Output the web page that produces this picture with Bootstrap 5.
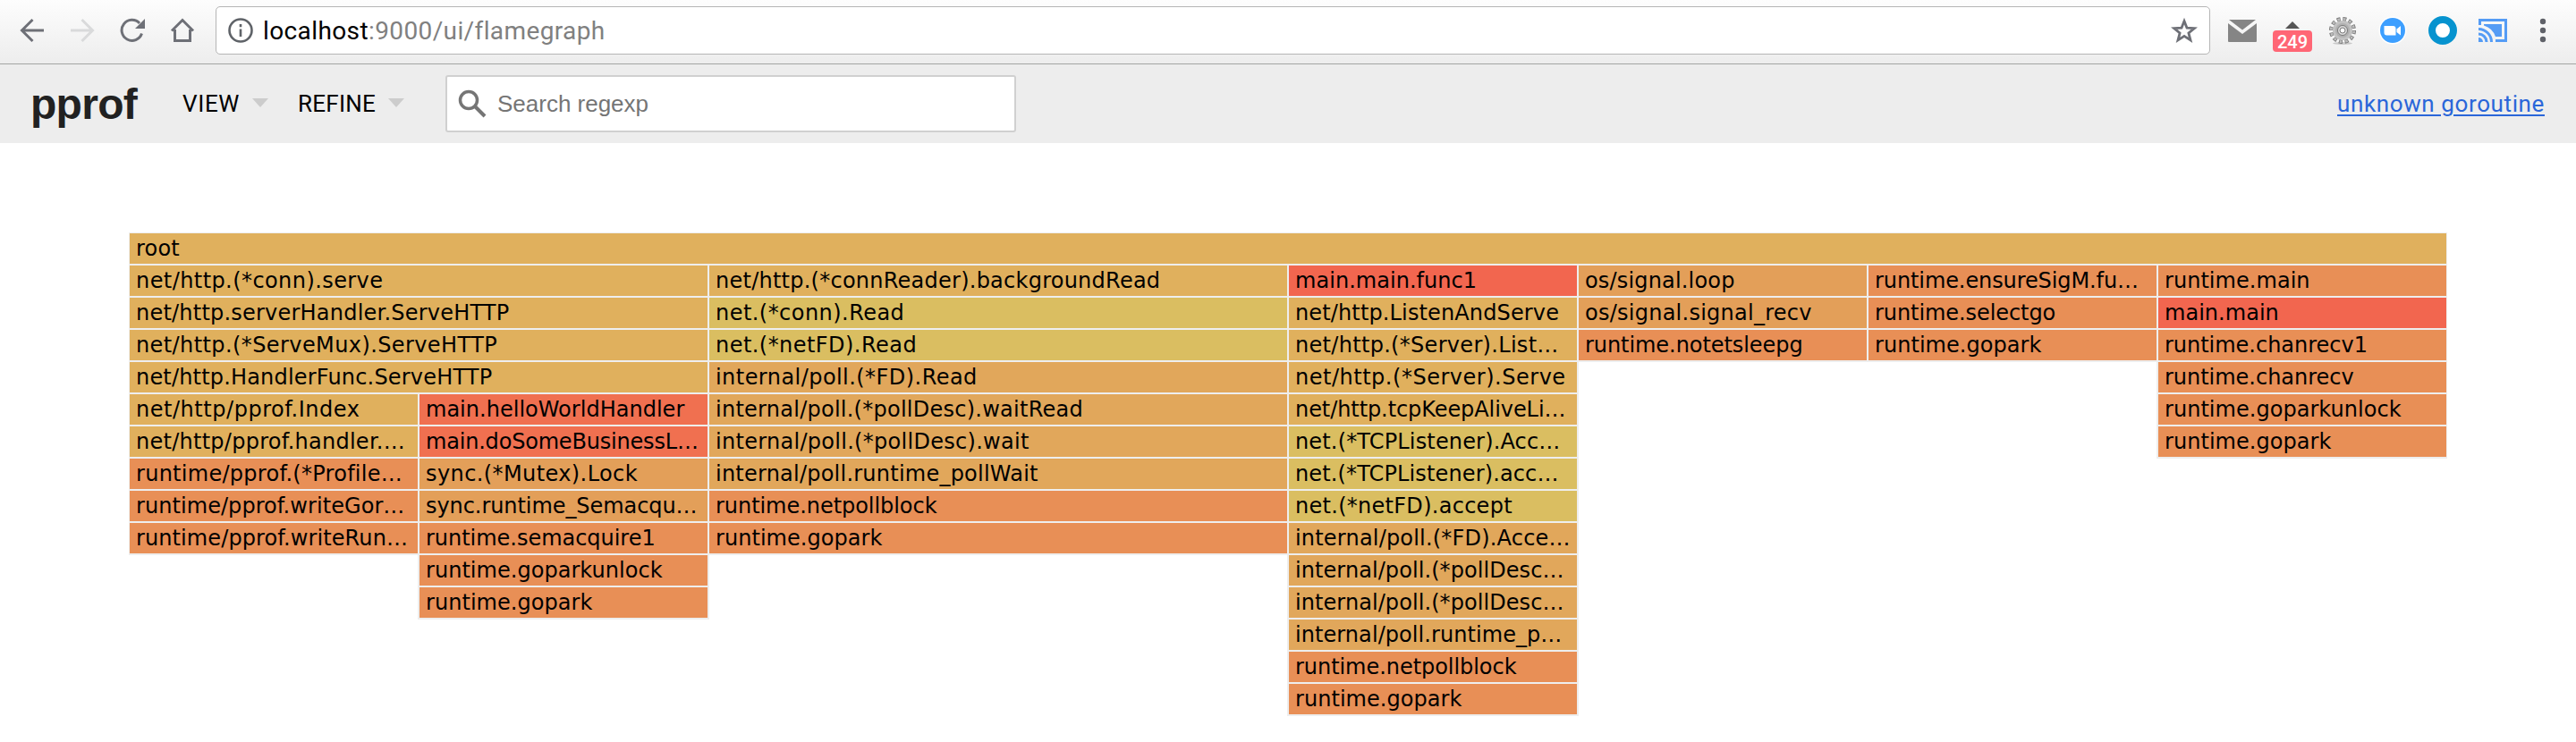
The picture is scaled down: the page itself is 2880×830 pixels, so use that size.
<!DOCTYPE html>
<html lang="en">
<head>
<meta charset="utf-8">
<title>pprof</title>
<link rel="stylesheet" href="https://cdn.jsdelivr.net/npm/bootstrap@5.3.0/dist/css/bootstrap.min.css">
<style>
body { background: #fff; font-family: Roboto, sans-serif; color: #212121; width: 2880px; height: 830px; overflow: hidden; }
.toolbar { height: 72px; background: linear-gradient(#fdfdfd, #ededed); border-bottom: 1px solid #a3a5a3; padding-bottom: 3px; position: relative; }
.nav-icons { width: 241px; padding-left: 22px; gap: 28px; }
.omnibox { width: 2230px; height: 54px; border: 1px solid #b5b5b5; border-radius: 5px; background: #fff; font-size: 28px; line-height: 52px; color: #808080; padding: 0 13px 0 13px; }
.omnibox b { font-weight: 400; color: #000; }
.url { margin-left: 11px; position: relative; top: 1px; }
.ext { padding-left: 20px; }
.ext svg { display: block; }
.badge-count { left: -6px; top: 17px; width: 44px; height: 24px; border-radius: 4px; background: #ff6675; color: #fff; font: 500 20px/26px Roboto, sans-serif; text-align: center; }
.appbar { height: 88px; background: #ededed; padding: 0 35px 0 34px; font-size: 26px; }
.brand { font: 700 48px/1 "Liberation Sans", sans-serif; width: 170px; padding-top: 2px; }
.menu-item { color: #000; gap: 14px; }
.tri { width: 0; height: 0; border: 9px solid transparent; border-top: 10px solid #ccc; border-bottom: 0; margin-top: -3px; }
.search { width: 638px; height: 64px; border: 2px solid #d0d0d0; border-radius: 3px; background: #fff; color: #757575; font: 26px/60px "Liberation Sans", sans-serif; padding-left: 12px; }
.goroutine { color: #2a66d9; text-decoration-thickness: 2px; text-underline-offset: 3px; }
.flame { width: 2592px; margin: 100px auto 0; overflow: hidden; font: 24px/34px "DejaVu Sans", sans-serif; color: #000; padding-bottom: 1px; }
.cell { height: 36px; border: 1px solid #eee; box-shadow: 0 0 0 1px #eee; padding-left: 7px; white-space: pre; position: relative; }
.w2 { width: 648px; } .w1 { width: 324px; }
.net { background: #e0b05d; } .nt { background: #dabe61; } .poll { background: #e1a75b; }
.os { background: #e39f59; } .rt { background: #e88f56; } .mn { background: #f2664f; } .mh { background: #f07050; }
</style>
</head>
<body>
<header class="toolbar d-flex align-items-center">
  <div class="nav-icons d-flex align-items-center">
    <svg width="28" height="28" viewBox="0 0 28 28" fill="none" stroke="#6e7077" stroke-width="3"><path d="M27 14H3M14.500 2 2.500 14l12 12"/></svg>
    <svg width="28" height="28" viewBox="0 0 28 28" fill="none" stroke="#d9dadb" stroke-width="3"><path d="M1 14h24M13.500 2l12 12-12 12"/></svg>
    <svg width="28" height="28" viewBox="0 0 28 28" fill="none" stroke="#6e7077" stroke-width="3"><path d="M24.500 17.500A11.500 11.500 0 1 1 22 6"/><path d="M28 1v11H17z" fill="#6e7077" stroke="none"/></svg>
    <svg width="28" height="28" viewBox="0 0 28 28" fill="none" stroke="#6e7077" stroke-width="3"><path d="M2 14.500 14 2.500l12 12M5.500 13v12.500h17V13"/></svg>
  </div>
  <div class="omnibox d-flex align-items-center">
    <svg width="28" height="28" viewBox="0 0 28 28" fill="none" stroke="#5f6368" stroke-width="2.600"><circle cx="14" cy="14" r="12.500"/><path d="M14 12.500V21M14 7v3.200"/></svg>
    <span class="url" data-w="382"><b>localhost</b>:9000/ui/flamegraph</span>
    <svg class="ms-auto" width="30" height="30" viewBox="0 0 30 30" fill="none" stroke="#6e7077" stroke-width="2.800"><path d="M15 4.500l3 7.700 8.300.5-6.400 5.200 2.100 8L15 21.400l-7 4.500 2.100-8-6.400-5.200 8.300-.5z"/></svg>
  </div>
  <div class="ext d-flex align-items-center">
    <svg width="32" height="26" viewBox="0 0 32 26"><path fill="#858585" d="M0 5l16 12L32 5v20a1 1 0 0 1-1 1H1a1 1 0 0 1-1-1zM1 1h30L16 12.500z"/></svg>
    <div class="position-relative" style="margin-left:24px;width:32px;height:34px">
      <svg width="32" height="34"><path fill="#555" d="M8 15l8-8 8 8z"/></svg>
      <div class="badge-count position-absolute">249</div>
    </div>
    <svg style="margin-left:24px" width="32" height="32" viewBox="-16 -16 32 32"><ellipse cy="14.500" rx="11" ry="1.500" fill="#c9c9c9"/><circle r="12.800" fill="none" stroke="#777" stroke-width="4.500" stroke-dasharray="3.900 2.802"/><circle r="12.800" fill="none" stroke="#bdbdbd" stroke-width="2.700" stroke-dasharray="2.500 4.202" stroke-dashoffset="-.700"/><circle r="11" fill="#c2c2c2"/><circle r="8" fill="#b0b0b0"/><circle r="5.500" fill="#ddd" stroke="#777"/><circle r="3" fill="#fff" stroke="#777"/></svg>
    <svg style="margin-left:24px" width="32" height="32" viewBox="0 0 32 32"><circle cx="16" cy="16" r="15.500" fill="#fff"/><circle cx="16" cy="16" r="14" fill="#3d9fff"/><path fill="#fff" d="M6.500 11h10a3 3 0 0 1 3 3v7.500h-10a3 3 0 0 1-3-3zM20.500 14.500l4.500-3.500v10.500l-4.500-3.500z"/></svg>
    <svg style="margin-left:24px" width="32" height="32"><circle cx="16" cy="16" r="12" fill="#fff" stroke="#0693cf" stroke-width="8"/></svg>
    <svg style="margin-left:24px" width="32" height="26" viewBox="0 0 32 26"><g fill="none" stroke="#559cf5" stroke-width="3"><path d="M1.500 7V1.500h29v23H19"/><path d="M0 11.500A14.500 14.500 0 0 1 14.500 26M0 17a9 9 0 0 1 9 9"/></g><path fill="#559cf5" d="M6 6h20v14h-7A20 20 0 0 0 6 7.500zM0 21a5 5 0 0 1 5 5H0z"/></svg>
    <svg style="margin-left:36px" width="8" height="28" fill="#5f6168"><circle cx="4" cy="4" r="3.200"/><circle cx="4" cy="14" r="3.200"/><circle cx="4" cy="24" r="3.200"/></svg>
  </div>
</header>
<nav class="appbar d-flex align-items-center">
  <div class="brand"><span data-w="119">pprof</span></div>
  <div class="menu-item d-flex align-items-center" style="width:129px"><span data-w="64">VIEW</span><i class="tri"></i></div>
  <div class="menu-item d-flex align-items-center" style="width:165px"><span data-w="87">REFINE</span><i class="tri"></i></div>
  <div class="search d-flex align-items-center"><svg width="32" height="32" viewBox="0 0 32 32" fill="none" stroke="#757575" stroke-width="3.500"><circle cx="12" cy="12" r="9.500"/><path d="M18.500 18.500 30 30" stroke-width="4"/></svg><span data-w="169" style="margin-left:12px">Search regexp</span></div>
  <a class="goroutine ms-auto" href="#" data-w="232">unknown goroutine</a>
</nav>
<main class="flame">
  <div class="cell net">root</div>
  <div class="d-flex align-items-start">
    <div class="w2">
      <div class="cell net">net/http.(*conn).serve</div>
      <div class="cell net">net/http.serverHandler.ServeHTTP</div>
      <div class="cell net">net/http.(*ServeMux).ServeHTTP</div>
      <div class="cell net">net/http.HandlerFunc.ServeHTTP</div>
      <div class="d-flex align-items-start">
        <div class="w1">
          <div class="cell net">net/http/pprof.Index</div>
          <div class="cell net">net/http/pprof.handler.…</div>
          <div class="cell rt">runtime/pprof.(*Profile…</div>
          <div class="cell rt">runtime/pprof.writeGor…</div>
          <div class="cell rt">runtime/pprof.writeRun…</div>
        </div>
        <div class="w1">
          <div class="cell mh">main.helloWorldHandler</div>
          <div class="cell mh">main.doSomeBusinessL…</div>
          <div class="cell os">sync.(*Mutex).Lock</div>
          <div class="cell os">sync.runtime_Semacqu…</div>
          <div class="cell rt">runtime.semacquire1</div>
          <div class="cell rt">runtime.goparkunlock</div>
          <div class="cell rt">runtime.gopark</div>
        </div>
      </div>
    </div>
    <div class="w2">
      <div class="cell net">net/http.(*connReader).backgroundRead</div>
      <div class="cell nt">net.(*conn).Read</div>
      <div class="cell nt">net.(*netFD).Read</div>
      <div class="cell poll">internal/poll.(*FD).Read</div>
      <div class="cell poll">internal/poll.(*pollDesc).waitRead</div>
      <div class="cell poll">internal/poll.(*pollDesc).wait</div>
      <div class="cell poll">internal/poll.runtime_pollWait</div>
      <div class="cell rt">runtime.netpollblock</div>
      <div class="cell rt">runtime.gopark</div>
    </div>
    <div class="w1">
      <div class="cell mn">main.main.func1</div>
      <div class="cell net">net/http.ListenAndServe</div>
      <div class="cell net">net/http.(*Server).List…</div>
      <div class="cell net">net/http.(*Server).Serve</div>
      <div class="cell net">net/http.tcpKeepAliveLi…</div>
      <div class="cell nt">net.(*TCPListener).Acc…</div>
      <div class="cell nt">net.(*TCPListener).acc…</div>
      <div class="cell nt">net.(*netFD).accept</div>
      <div class="cell poll">internal/poll.(*FD).Acce…</div>
      <div class="cell poll">internal/poll.(*pollDesc…</div>
      <div class="cell poll">internal/poll.(*pollDesc…</div>
      <div class="cell poll">internal/poll.runtime_p…</div>
      <div class="cell rt">runtime.netpollblock</div>
      <div class="cell rt">runtime.gopark</div>
    </div>
    <div class="w1">
      <div class="cell os">os/signal.loop</div>
      <div class="cell os">os/signal.signal_recv</div>
      <div class="cell rt">runtime.notetsleepg</div>
    </div>
    <div class="w1">
      <div class="cell rt">runtime.ensureSigM.fu…</div>
      <div class="cell rt">runtime.selectgo</div>
      <div class="cell rt">runtime.gopark</div>
    </div>
    <div class="w1">
      <div class="cell rt">runtime.main</div>
      <div class="cell mn">main.main</div>
      <div class="cell rt">runtime.chanrecv1</div>
      <div class="cell rt">runtime.chanrecv</div>
      <div class="cell rt">runtime.goparkunlock</div>
      <div class="cell rt">runtime.gopark</div>
    </div>
  </div>
</main>
<script src="https://cdn.jsdelivr.net/npm/bootstrap@5.3.0/dist/js/bootstrap.bundle.min.js"></script>
<script>
// Glyph advances (thousandths of an em) used to space the frame labels.
const ADV = {a:601,b:623,c:521,d:623,e:596,f:352,g:623,h:633,i:274,j:344,k:592,l:274,m:973,n:633,o:607,p:623,q:623,r:427,s:521,t:394,u:633,v:592,w:818,x:592,y:592,z:525,
A:684,B:686,C:698,D:771,E:632,F:575,G:775,H:751,I:421,K:693,L:557,M:843,P:603,R:695,S:684,T:616,W:989,'.':364,'/':454,'(':454,')':454,'*':636,'_':636,'1':636,'…':818};
// Spread or tighten the letters of a label until it takes the given width.
function fitText(el, width) {
  const r = document.createRange();
  r.selectNodeContents(el);
  const gap = (width - r.getBoundingClientRect().width) / el.textContent.length;
  el.style.letterSpacing = gap.toFixed(3) + 'px';
}
document.querySelectorAll('[data-w]').forEach(el => fitText(el, +el.dataset.w));
document.querySelectorAll('.cell').forEach(el => fitText(el, [...el.textContent].reduce((s, c) => s + ADV[c] * 0.024, 0)));
</script>
</body>
</html>
